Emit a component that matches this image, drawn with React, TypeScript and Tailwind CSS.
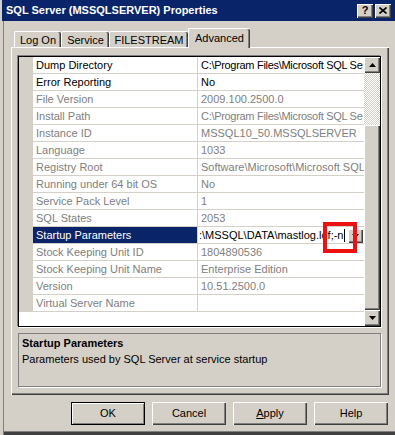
import React from "react";

type Row = { name: string; value: string; on?: boolean; edit?: boolean; tight?: boolean };

const rows: Row[] = [
  { name: "Dump Directory", value: "C:\\Program Files\\Microsoft SQL Se", on: true, tight: true },
  { name: "Error Reporting", value: "No", on: true },
  { name: "File Version", value: "2009.100.2500.0" },
  { name: "Install Path", value: "C:\\Program Files\\Microsoft SQL Se", tight: true },
  { name: "Instance ID", value: "MSSQL10_50.MSSQLSERVER" },
  { name: "Language", value: "1033" },
  { name: "Registry Root", value: "Software\\Microsoft\\Microsoft SQL" },
  { name: "Running under 64 bit OS", value: "No" },
  { name: "Service Pack Level", value: "1" },
  { name: "SQL States", value: "2053" },
  { name: "Startup Parameters", value: ":\\MSSQL\\DATA\\mastlog.ldf;-n", on: true, edit: true },
  { name: "Stock Keeping Unit ID", value: "1804890536" },
  { name: "Stock Keeping Unit Name", value: "Enterprise Edition" },
  { name: "Version", value: "10.51.2500.0" },
  { name: "Virtual Server Name", value: "" },
];

// classic raised 3d edge
const raised = "shadow-[inset_1px_1px_0_#fff,inset_-1px_-1px_0_#404040,inset_-2px_-2px_0_#808080]";

function Arrow({ up }: { up?: boolean }) {
  return (
    <svg width="7" height="4" viewBox="0 0 7 4">
      <polygon points={up ? "3.5,0 7,4 0,4" : "0,0 7,0 3.5,4"} fill="#000" />
    </svg>
  );
}

function Tab({ label, w, active }: { label: string; w: string; active?: boolean }) {
  if (active) {
    return (
      <div
        className={`relative z-10 ${w} h-[20px] bg-[#d4d0c8] rounded-t-[2px] border-t border-l border-white shadow-[inset_-1px_0_0_#404040,inset_-2px_0_0_#808080] flex justify-center pt-[1px] leading-[16px]`}
      >
        {label}
      </div>
    );
  }
  return (
    <div
      className={`${w} h-[17px] bg-[#d4d0c8] rounded-t-[2px] border-t border-l border-white shadow-[inset_-1px_0_0_#404040,inset_-2px_0_0_#808080] flex justify-center pt-[1px] leading-[15px]`}
    >
      {label}
    </div>
  );
}

function Btn({ children, def }: { children: React.ReactNode; def?: boolean }) {
  return (
    <div
      className={`w-[74px] h-[23px] flex items-center justify-center bg-[#d4d0c8] ${
        def
          ? "border border-black shadow-[inset_1px_1px_0_#fff,inset_-1px_-1px_0_#808080]"
          : raised
      }`}
    >
      {children}
    </div>
  );
}

export default function App() {
  return (
    <div className="relative w-[395px] h-[435px] overflow-hidden bg-[#d4d0c8] pl-[2px] flex flex-col font-['Liberation_Sans',Arial,sans-serif] text-[11px] text-black">
      {/* title bar */}
      <div className="h-[21px] shrink-0 bg-[#0a246a] flex items-center justify-between pl-[4px] pr-[4px]">
        <span className="text-white font-bold text-[11px] leading-none">SQL Server (MSSQLSERVER) Properties</span>
        <div className="flex gap-[2px]">
          <div className={`w-[16px] h-[14px] bg-[#d4d0c8] ${raised} flex items-center justify-center font-bold text-[11px] leading-none pb-[1px]`}>
            ?
          </div>
          <div className={`w-[16px] h-[14px] bg-[#d4d0c8] ${raised} flex items-center justify-center pb-[1px] pr-[1px]`}>
            <svg width="8" height="7" viewBox="0 0 8 7">
              <path d="M0.5 0.5 L7.5 6.5 M7.5 0.5 L0.5 6.5" stroke="#000" strokeWidth="1.6" />
            </svg>
          </div>
        </div>
      </div>

      <div className="flex-1 ml-[1px] border-l border-[#808080] flex flex-col">
        {/* tabs */}
        <div className="mt-[8px] h-[19px] pl-[10px] flex items-end">
          <Tab label="Log On" w="w-[47px]" />
          <Tab label="Service" w="w-[48px]" />
          <Tab label="FILESTREAM" w="w-[79px]" />
          <Tab label="Advanced" w="w-[62px]" active />
        </div>

        {/* panel */}
        <div className="ml-[7px] mt-[-1px] w-[378px] h-[348px] bg-[#d4d0c8] border-t border-l border-white shadow-[inset_-1px_-1px_0_#404040,inset_-2px_-2px_0_#808080] pt-[8px] pl-[6px]">
          <div className="w-[363px] h-[271px] border border-black bg-white shadow-[-1px_-1px_0_#808080,1px_1px_0_#fff] flex overflow-hidden">
            <div className="w-[345px] shrink-0 flex flex-col overflow-hidden">
              {rows.map((r) => (
                <div key={r.name} className="flex h-[17px] leading-[16px]">
                  <div className="w-[14px] shrink-0 bg-[#d4d0c8]" />
                  <div
                    className={`w-[165px] shrink-0 pl-[3px] border-r border-b border-[#d4d0c8] whitespace-nowrap overflow-hidden ${
                      r.edit ? "bg-[#0a246a] text-white" : r.on ? "text-black" : "text-[#808080]"
                    }`}
                  >
                    {r.name}
                  </div>
                  {r.edit ? (
                    <div className="w-[166px] shrink-0 border-b border-[#d4d0c8] flex items-start pl-[1px] pr-[1px] overflow-hidden">
                      <span className="whitespace-nowrap overflow-hidden">{r.value}</span>
                      <span className="w-[1px] h-[13px] mt-[2px] ml-[1px] bg-black shrink-0" />
                      <div className={`ml-auto mt-[2px] w-[15px] h-[14px] bg-[#d4d0c8] ${raised} flex items-center justify-center shrink-0`}>
                        <Arrow />
                      </div>
                    </div>
                  ) : (
                    <div
                      className={`w-[166px] shrink-0 pl-[3px] border-b border-[#d4d0c8] whitespace-nowrap overflow-hidden ${
                        r.on ? "text-black" : "text-[#808080]"
                      } ${r.tight ? "tracking-[-0.3px]" : ""}`}
                    >
                      {r.value}
                    </div>
                  )}
                </div>
              ))}
            </div>
            {/* scrollbar */}
            <div className="w-[16px] shrink-0 flex flex-col">
              <div className={`h-[16px] bg-[#d4d0c8] ${raised} flex items-center justify-center`}>
                <Arrow up />
              </div>
              <div className="h-[52px] bg-[repeating-conic-gradient(#fff_0_25%,#d4d0c8_0_50%)] bg-[length:2px_2px]" />
              <div className={`flex-1 bg-[#d4d0c8] ${raised}`} />
              <div className={`h-[16px] bg-[#d4d0c8] ${raised} flex items-center justify-center`}>
                <Arrow />
              </div>
            </div>
          </div>

          {/* description */}
          <div className="mt-[6px] w-[363px] h-[54px] border border-[#808080] shadow-[1px_1px_0_#fff] pl-[3px] pt-[1px] leading-[16px]">
            <div className="font-bold">Startup Parameters</div>
            <div>Parameters used by SQL Server at service startup</div>
          </div>
        </div>

        {/* buttons */}
        <div className="mt-[7px] pr-[7px] flex justify-end gap-[7px]">
          <Btn def>OK</Btn>
          <Btn>Cancel</Btn>
          <Btn>
            <span>
              <span className="underline">A</span>pply
            </span>
          </Btn>
          <Btn>Help</Btn>
        </div>

        <div className="flex-1" />
        <div className="h-[1px] bg-[#808080]" />
        <div className="h-[3px] bg-[#404040]" />
      </div>

      {/* red highlight marker */}
      <div className="absolute left-[323px] top-[222px] w-[34px] h-[31px] border-[4px] border-[#ee1111]" />
    </div>
  );
}
